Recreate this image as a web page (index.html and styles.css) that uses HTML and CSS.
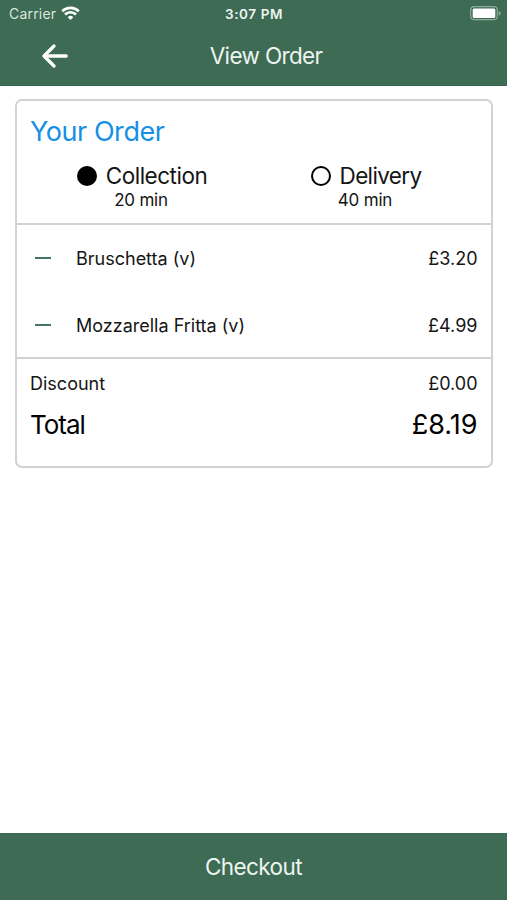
FILE: index.html
```html
<!DOCTYPE html>
<html lang="en">
<head>
<meta charset="utf-8">
<title>View Order</title>
<link rel="stylesheet" href="styles.css">
</head>
<body>
<header class="header">
  <div class="status">
    <div class="carrier"><span class="carrier-name">Carrier</span>
      <svg class="wifi" width="19" height="15" viewBox="0 0 19 15" fill="none" stroke="#fff" stroke-width="2.6"><path d="M1.2 5.2a12 12 0 0 1 16.6 0"/><path d="M4 8.5a8 8 0 0 1 11 0"/><path d="M9.5 14L6.7 11.2a4 4 0 0 1 5.6 0z" fill="#fff" stroke="none"/></svg>
    </div>
    <span class="time">3:07 PM</span>
    <svg class="battery" width="31" height="15" viewBox="0 0 31 15"><rect x=".7" y=".7" width="26.6" height="13" rx="3.5" fill="none" stroke="#8bab9b" stroke-width="1.2"/><rect x="2.7" y="2.6" width="22.6" height="9.4" rx="1.5" fill="#fff"/><path d="M28.7 5v4.6q2-.7 2-2.3t-2-2.3z" fill="#8bab9b"/></svg>
  </div>
  <nav class="nav">
    <svg class="back" width="28" height="26" viewBox="0 0 28 26" fill="none" stroke="#fff" stroke-width="3.3" stroke-linecap="round" stroke-linejoin="round"><path d="M25.2 13H3.5"/><path d="M13 3L3 13l10 10"/></svg>
    <h1 class="title">View Order</h1>
  </nav>
</header>
<main class="main">
  <section class="card">
    <div class="top">
      <h2 class="heading">Your Order</h2>
      <div class="methods">
        <div class="method">
          <div class="choice"><span class="radio selected"></span><span class="label collection">Collection</span></div>
          <span class="wait">20 min</span>
        </div>
        <div class="method">
          <div class="choice"><span class="radio"></span><span class="label delivery">Delivery</span></div>
          <span class="wait">40 min</span>
        </div>
      </div>
    </div>
    <div class="items">
      <div class="item"><span class="minus"></span><span class="name">Bruschetta (v)</span><span class="price">£3.20</span></div>
      <div class="item"><span class="minus"></span><span class="name">Mozzarella Fritta (v)</span><span class="price">£4.99</span></div>
    </div>
    <div class="summary">
      <div class="discount"><span class="discount-label">Discount</span><span class="price">£0.00</span></div>
      <div class="total"><span class="total-label">Total</span><span class="total-price">£8.19</span></div>
    </div>
  </section>
</main>
<footer class="footer"><span class="checkout">Checkout</span></footer>
</body>
</html>
```
FILE: styles.css
```css
* { box-sizing: border-box; }
body {
  margin: 0;
  height: 900px;
  display: flex;
  flex-direction: column;
  overflow: hidden;
  background: #fff;
  color: #151515;
  font-family: Inter, "Liberation Sans", sans-serif;
  font-size: 18px;
}
h1, h2 { margin: 0; font-weight: 400; }
span { white-space: nowrap; }
.header {
  height: 86px;
  background: #3d6b54;
  color: #fff;
  border-bottom: 1px solid #36634d;
}
.status {
  height: 27px;
  display: grid;
  grid-template-columns: 1fr auto 1fr;
  align-items: center;
  padding: 0 6px 0 9px;
}
.carrier { display: flex; align-items: center; gap: 5px; color: #d9e5de; }
.carrier-name { font-size: 14px; letter-spacing: 0.2px; }
.time { font-size: 13.5px; font-weight: 600; letter-spacing: 0.6px; margin-right: 2px; color: #eef4f0; }
.battery { justify-self: end; }
.nav {
  height: 58px;
  display: grid;
  grid-template-columns: 70px 1fr 45px;
  align-items: center;
}
.back { margin-left: 41px; }
.title { margin-bottom: 2px; text-align: center; font-size: 22.5px; letter-spacing: -0.65px; color: #eef4f0; }
.main { flex: 1; padding: 13px 14px 0 15px; }
.card {
  height: 369px;
  border: 2px solid #d2d2d2;
  border-radius: 7px;
}
.top { height: 124px; padding: 15px 0 0; border-bottom: 2px solid #d2d2d2; }
.heading { margin-left: 13px; font-size: 27px; line-height: 32px; letter-spacing: -0.45px; color: #168fe5; }
.methods { display: grid; grid-template-columns: 1fr 1fr; margin: 15px 13px 0 13px; }
.method { display: flex; flex-direction: column; align-items: center; }
.choice { display: flex; align-items: center; gap: 9px; height: 26px; }
.radio { width: 20px; height: 20px; border: 2px solid #000; border-radius: 50%; }
.selected { background: #000; }
.label { margin-bottom: 2px; font-size: 22.5px; letter-spacing: -0.5px; }
.delivery { letter-spacing: -0.65px; }
.wait { font-size: 17px; line-height: 22px; letter-spacing: -0.2px; margin-right: 2px; }
.items { height: 134px; border-bottom: 2px solid #d2d2d2; }
.item { height: 67px; display: flex; align-items: center; padding: 0 13.5px 0 18px; }
.minus { width: 16px; height: 2px; margin: 0 25px 2px 0; background: #44755e; }
.price { margin-left: auto; font-size: 18px; }
.summary { padding: 11px 13.5px 0 13px; }
.discount, .total { display: flex; align-items: center; }
.discount { height: 26px; }
.total { height: 56px; color: #000; }
.total-label { font-size: 26px; letter-spacing: -1px; }
.total-price { margin-left: auto; font-size: 27px; }
.footer {
  height: 67px;
  display: flex;
  align-items: center;
  justify-content: center;
  background: #3d6b54;
  color: #eef4f0;
  font-size: 22.5px;
  letter-spacing: -0.6px;
}
```
